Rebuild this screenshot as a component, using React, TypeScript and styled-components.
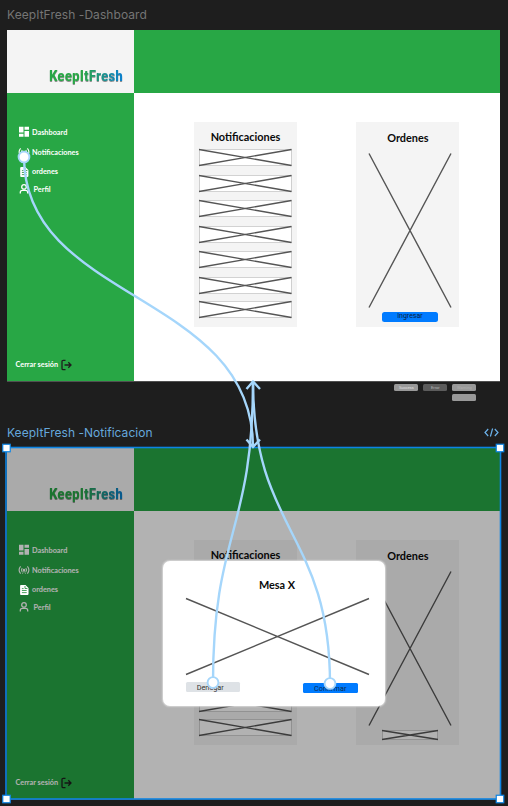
import React from "react";
import styled, { createGlobalStyle, css } from "styled-components";

const GlobalStyle = createGlobalStyle`
  * { box-sizing: border-box; }
  html, body { margin: 0; padding: 0; background: #1e1e1e; }
  svg { display: block; }
`;

const Canvas = styled.main`
  position: relative;
  width: 508px;
  height: 806px;
  overflow: hidden;
  background: #1e1e1e;
  padding-left: 7px;
  font-family: Lato, "Open Sans", sans-serif;
`;

const FrameLabel = styled.div<{ $selected?: boolean }>`
  display: flex;
  align-items: center;
  justify-content: space-between;
  width: 492px;
  height: 30px;
  font: 400 12px/30px Inter, sans-serif;
  letter-spacing: ${(p) => (p.$selected ? "0.03px" : "0.06px")};
  color: ${(p) => (p.$selected ? "#66a8dc" : "#757575")};
`;

const Frame = styled.section`
  position: relative;
  display: flex;
  width: 493px;
  height: 351px;
  background: #fff;
  box-shadow: 0 0.7px 0 0 #666;
`;

const Side = styled.aside`
  display: flex;
  flex-direction: column;
  width: 127px;
  background: #28a745;
`;

const Brand = styled.div`
  display: flex;
  align-items: flex-end;
  justify-content: flex-end;
  height: 63px;
  padding: 0 11px 7.5px 0;
  background: #f4f4f4;
`;

const BrandName = styled.span`
  font: 700 15.5px/20px Roboto, sans-serif;
  font-stretch: condensed;
  background: linear-gradient(90deg, #28a745 45%, #0b7fd0 100%);
  background-clip: text;
  -webkit-background-clip: text;
  color: transparent;
  filter: drop-shadow(0 1px 0.6px rgba(0, 0, 0, 0.4));
`;

const Menu = styled.nav`
  display: flex;
  flex-direction: column;
  padding: 32px 0 0 12px;
`;

const MenuItem = styled.a<{ $h: number; $indent?: number }>`
  display: flex;
  align-items: center;
  gap: ${(p) => 3 + (p.$indent ?? 0)}px;
  height: ${(p) => p.$h}px;
  color: #fff;
  font-size: 7.3px;
  font-weight: 700;
  white-space: nowrap;
  svg { width: 10px; height: 12px; flex: none; overflow: visible; }
`;

const Logout = styled(MenuItem)`
  margin: auto 0 10px 8.5px;
  svg { width: 11px; color: #1e1e1e; }
`;

const Main = styled.div`
  flex: 1;
  display: flex;
  flex-direction: column;
`;

const TopBar = styled.header`
  height: 63px;
  background: #28a745;
`;

const Cards = styled.div`
  display: flex;
  gap: 59.4px;
  padding: 28.5px 0 0 60px;
`;

const Card = styled.article<{ $shift?: number }>`
  display: flex;
  flex-direction: column;
  align-items: center;
  width: 103px;
  height: 205.5px;
  padding-left: ${(p) => p.$shift ?? 0}px;
  background: #f4f4f4;
`;

const CardTitle = styled.h2<{ $top: number }>`
  margin: ${(p) => p.$top}px 0 0;
  height: 14px;
  font-size: 10.9px;
  line-height: 14px;
  font-weight: 700;
  color: #0a0a0a;
`;

const OrdersTitle = styled(CardTitle)`
  width: 100%;
  padding-right: 4px;
  text-align: center;
`;

const CrossBox = styled.div<{ $w: number; $h: number; $mt: number; $boxed?: boolean }>`
  width: ${(p) => p.$w}px;
  height: ${(p) => p.$h}px;
  margin-top: ${(p) => p.$mt}px;
  flex: none;
  ${(p) => p.$boxed && css`background: #fff; box-shadow: inset 0 0 0 0.8px #c4c4c4;`}
  svg { width: 100%; height: 100%; overflow: visible; }
`;

function Cross(props: { w: number; h: number; mt: number; boxed?: boolean }) {
  const { w, h, mt, boxed } = props;
  return (
    <CrossBox $w={w} $h={h} $mt={mt} $boxed={boxed}>
      <svg viewBox={`0 0 ${w} ${h}`} stroke="#555" strokeWidth="1.4">
        <path d={`M0 .5 L${w} ${h - 0.5} M0 ${h - 0.5} L${w} .5`} />
      </svg>
    </CrossBox>
  );
}

const Button = styled.button<{ $muted?: boolean; $w?: number }>`
  width: ${(p) => p.$w ?? 54.5}px;
  height: 10px;
  padding: 0 ${(p) => (p.$muted ? 5 : 0)}px 0 0;
  border: 0;
  border-radius: 1.5px;
  background: ${(p) => (p.$muted ? "#dee2e6" : "#007bff")};
  color: ${(p) => (p.$muted ? "#333" : "#0b2c50")};
  font: 400 7px/9px Roboto, sans-serif;
  text-align: center;
`;

const EnterButton = styled(Button)`
  margin-top: 4px;
  border-radius: 2.5px;
  color: #08203d;
`;

const Shade = styled.div`
  position: absolute;
  inset: 0;
  background: rgba(0, 0, 0, 0.3);
`;

const BrightIcon = styled.span`
  position: absolute;
  left: 12px;
  top: 135.5px;
  color: #fff;
  svg { width: 10px; height: 12px; overflow: visible; }
`;

const Modal = styled.div`
  position: absolute;
  left: 156px;
  top: 112.5px;
  display: flex;
  flex-direction: column;
  align-items: center;
  width: 222px;
  height: 145px;
  border-radius: 7px;
  background: #fff;
  box-shadow: 0 0 1.5px 0.8px rgba(220, 220, 220, 0.8);
  padding: 0 16.5px 0 22.5px;
`;

const Actions = styled.div`
  display: flex;
  align-items: flex-start;
  justify-content: space-between;
  width: 100%;
  padding-right: 11px;
  margin-top: 7px;
  ${Button} { font-size: 7.3px; }
  ${Button} + ${Button} { margin-top: 1px; }
`;

const Palette = styled.div`
  display: grid;
  grid-template-columns: repeat(3, 24px);
  gap: 3px 5px;
  width: max-content;
  height: 37px;
  padding-top: 3px;
  margin-left: 387.4px;
  align-content: start;
`;

const Chip = styled.span<{ $bg: string; $fg: string; $col?: number }>`
  ${(p) => p.$col && css`grid-column: ${p.$col};`}
  height: 7px;
  border-radius: 1.5px;
  background: ${(p) => p.$bg};
  color: ${(p) => p.$fg};
  font: 400 4px/7px Roboto, sans-serif;
  text-align: center;
`;

const Links = styled.svg`
  position: absolute;
  left: 0;
  top: 0;
`;

const DashboardIcon = () => (
  <svg viewBox="0 0 10 12" fill="currentColor">
    <path d="M0 .7h4.5v5.8H0zM5.5.7H10v3H5.5zM0 7.8h4.5v3H0zM5.5 4.9H10v5.9H5.5z" />
  </svg>
);
const SignalIcon = () => (
  <svg viewBox="0 0 10 12" fill="none" stroke="currentColor" strokeWidth="1.1">
    <circle cx="5" cy="6" r="1.2" fill="currentColor" stroke="none" />
    <path d="M3.2 4.1q-1.4 1.9 0 3.8M6.8 4.1q1.4 1.9 0 3.8M1.6 2.4q-3 3.6 0 7.2M8.4 2.4q3 3.6 0 7.2" />
    <path d="M5 6L3.4 10M5 6l1.6 4" strokeWidth=".6" />
  </svg>
);
const DocIcon = () => (
  <svg viewBox="0 0 10 12">
    <path d="M2.2 1h4.2L9.4 4v6q0 1-1 1H2.2q-1 0-1-1V2q0-1 1-1z" fill="currentColor" />
    <path d="M6 2v2.5h2.4M2.9 4.6h1.7M2.9 6.5h4.8M2.9 8.6h4.8" fill="none" stroke="#218c3a" strokeWidth=".8" />
  </svg>
);
const PersonIcon = () => (
  <svg viewBox="0 0 10 12" fill="none" stroke="currentColor" strokeWidth="1.3">
    <circle cx="5" cy="3.9" r="2.3" />
    <path d="M1.3 10.5V9.4q0-2 2.1-2h3.2q2.1 0 2.1 2v1.1" />
  </svg>
);
const ExitIcon = () => (
  <svg viewBox="0 0 11 12" fill="none" stroke="currentColor" strokeWidth="1.3">
    <path d="M4.5 1.3H2.2Q1 1.3 1 2.5v7q0 1.2 1.2 1.2h2.3M3.5 6H10M7.3 3.3L10 6 7.3 8.7" />
  </svg>
);
const CodeIcon = () => (
  <svg width="15" height="10" viewBox="0 0 15 10" fill="none" stroke="#6cb2ea" strokeWidth="1.2">
    <path d="M4.2 1L1 4.5l3.2 3.5M10.8 1L14 4.5l-3.2 3.5M8.6 .5L6.4 8.5" />
  </svg>
);

const stackGaps = [5, 8.5, 8, 9, 8.5, 9, 7];

function Screen({ dimmed, children }: { dimmed?: boolean; children?: React.ReactNode }) {
  return (
    <Frame>
      <Side>
        <Brand>
          <BrandName>KeepItFresh</BrandName>
        </Brand>
        <Menu>
          <MenuItem $h={14}><DashboardIcon />Dashboard</MenuItem>
          <MenuItem $h={26}><SignalIcon />Notificaciones</MenuItem>
          <MenuItem $h={13}><DocIcon />ordenes</MenuItem>
          <MenuItem $h={22} $indent={1.5}><PersonIcon />Perfil</MenuItem>
        </Menu>
        <Logout $h={13}>Cerrar sesión<ExitIcon /></Logout>
      </Side>
      <Main>
        <TopBar />
        <Cards>
          <Card>
            <CardTitle $top={8.5}>Notificaciones</CardTitle>
            {stackGaps.map((gap, i) => (
              <Cross key={i} w={92.5} h={17} mt={gap} boxed />
            ))}
          </Card>
          <Card $shift={4}>
            <OrdersTitle $top={9}>Ordenes</OrdersTitle>
            <Cross w={82} h={155} mt={8} />
            {dimmed ? <Cross w={56} h={10} mt={4} boxed /> : <EnterButton $w={56}>Ingresar</EnterButton>}
          </Card>
        </Cards>
      </Main>
      {children}
    </Frame>
  );
}

const joints = [[24, 157], [213, 682.5], [330, 683.5]];
const corners = [[6.5, 448], [500, 448], [6.5, 799], [500, 799]];

export default function App() {
  return (
    <Canvas>
      <GlobalStyle />
      <FrameLabel>KeepItFresh -Dashboard</FrameLabel>
      <Screen />
      <Palette>
        <Chip $bg="#999" $fg="#e0e0e0">Success</Chip>
        <Chip $bg="#5c5c5c" $fg="#bbb">Error</Chip>
        <Chip $bg="#999" $fg="#b0b0b0">Warning</Chip>
        <Chip $bg="#999" $fg="#999" $col={3} />
      </Palette>
      <FrameLabel $selected>
        KeepItFresh -Notificacion
        <CodeIcon />
      </FrameLabel>
      <Screen dimmed>
        <Shade />
        <BrightIcon><DocIcon /></BrightIcon>
        <Modal>
          <CardTitle $top={17.5}>Mesa X</CardTitle>
          <Cross w={183} h={77} mt={6} />
          <Actions>
            <Button $muted>Denegar</Button>
            <Button>Confirmar</Button>
          </Actions>
        </Modal>
      </Screen>
      <Links width="508" height="806" viewBox="0 0 508 806" fill="none">
        <rect x="6" y="447.5" width="494.5" height="351.5" stroke="#0d84e3" strokeWidth="1.6" />
        {corners.map(([x, y]) => (
          <rect key={`${x}-${y}`} x={x - 3.75} y={y - 3.75} width="7.5" height="7.5" fill="#fff" stroke="#0d84e3" strokeWidth="1.2" />
        ))}
        <g stroke="#a5d6fb" strokeWidth="2.4">
          <path d="M24 157C24 302 253 292 253 447" />
          <path d="M213 683C213 532 253 532 253 381" />
          <path d="M330 684C330 532 253 532 253 381" />
          <path d="M246.5 389L253 381.5L260 389M246.5 439.5L253 447L260 439.5" />
          {joints.map(([x, y]) => (
            <circle key={x} cx={x} cy={y} r="5.4" fill="#fff" strokeWidth="1.9" />
          ))}
        </g>
      </Links>
    </Canvas>
  );
}
